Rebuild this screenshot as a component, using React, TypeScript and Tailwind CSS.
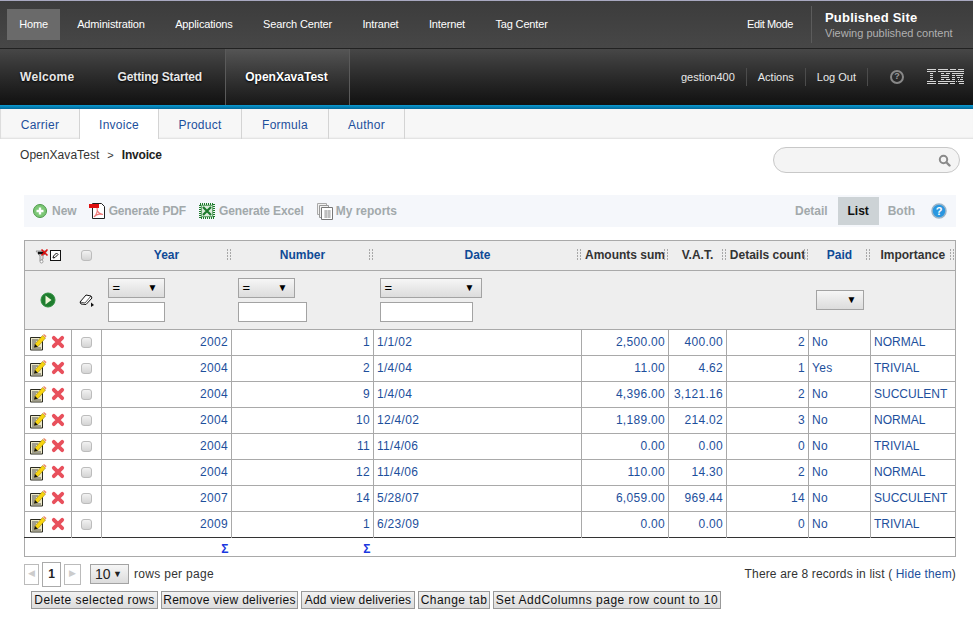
const topNav = ["Administration", "Applications", "Search Center", "Intranet", "Internet", "Tag Center"];
const tabs = [
  { label: "Carrier", width: "w-[79px]" },
  { label: "Invoice", width: "w-[79px]", active: true },
  { label: "Product", width: "w-[83px]" },
  { label: "Formula", width: "w-[87px]" },
  { label: "Author", width: "w-[76px]" },
];
const columns = [
  { label: "Year", link: true },
  { label: "Number", link: true },
  { label: "Date", link: true },
  { label: "Amounts sum" },
  { label: "V.A.T." },
  { label: "Details count" },
  { label: "Paid", link: true },
  { label: "Importance" },
];
const rows = [
  ["2002", "1", "1/1/02", "2,500.00", "400.00", "2", "No", "NORMAL"],
  ["2004", "2", "1/4/04", "11.00", "4.62", "1", "Yes", "TRIVIAL"],
  ["2004", "9", "1/4/04", "4,396.00", "3,121.16", "2", "No", "SUCCULENT"],
  ["2004", "10", "12/4/02", "1,189.00", "214.02", "3", "No", "NORMAL"],
  ["2004", "11", "11/4/06", "0.00", "0.00", "0", "No", "TRIVIAL"],
  ["2004", "12", "11/4/06", "110.00", "14.30", "2", "No", "NORMAL"],
  ["2007", "14", "5/28/07", "6,059.00", "969.44", "14", "No", "SUCCULENT"],
  ["2009", "1", "6/23/09", "0.00", "0.00", "0", "No", "TRIVIAL"],
];
const rightAligned = [true, true, false, true, true, true, false, false];
const actions = [
  { label: "Delete selected rows", className: "w-[127px] tracking-[0.45px]" },
  { label: "Remove view deliveries", className: "w-[137px] tracking-[0.3px]" },
  { label: "Add view deliveries", className: "w-[114px] tracking-[0.2px]" },
  { label: "Change tab", className: "w-[72px] tracking-[0.45px]" },
  { label: "Set AddColumns page row count to 10", className: "w-[228px] tracking-[0.5px]" },
];

// stripes of the logo: [x, width] per row
const ibmRows = [
  [[0, 9], [11, 10], [23, 6], [31, 6]],
  [[0, 9], [11, 12], [23, 7], [30, 7]],
  [[3, 3], [14, 3], [19, 4], [25, 12]],
  [[3, 3], [14, 8], [25, 3], [29, 5], [34, 2]],
  [[3, 3], [14, 8], [25, 3], [30, 3], [34, 2]],
  [[3, 3], [14, 3], [19, 4], [25, 3], [31, 1], [33, 3]],
  [[0, 9], [11, 12], [23, 5], [29, 1], [31, 6]],
  [[0, 9], [11, 10], [23, 5], [32, 5]],
];

function Grip() {
  return (
    <svg className="absolute right-0 top-[8px]" width="5" height="13" viewBox="0 0 5 13">
      {[0, 3, 6, 9].map((y) => (
        <g key={y} fill="#a8a8a8">
          <rect x="0" y={y} width="1" height="2" />
          <rect x="3" y={y} width="1" height="2" />
        </g>
      ))}
    </svg>
  );
}

function Checkbox() {
  return (
    <span className="mx-auto block h-[11px] w-[11px] rounded-[3px] border border-[#bcbcbc] bg-gradient-to-b from-[#f2f2f2] to-[#d4d4d4]" />
  );
}

function EditIcon() {
  return (
    <svg width="18" height="17" viewBox="0 0 18 17">
      <path d="M1.5 3.500h12v12.500h-12z" fill="#ece8c8" stroke="#2a2a20" />
      <path d="M3 6h6M3 8h4M3 10h3M3 12h2M3 14h9" stroke="#555" />
      <path d="M6 10l7.500-8.500 3 2.500-7.500 8.500-3.500.8z" fill="#f8d510" stroke="#8a7400" strokeWidth=".5" />
      <path d="M14 1l1-1 2.500 2-.8 1.500z" fill="#ee8a6a" />
      <path d="M6 10l-1 3.500 3.800-.8z" fill="#111" />
    </svg>
  );
}

function DeleteIcon() {
  return (
    <svg width="14" height="14" viewBox="0 0 14 14">
      <path d="M2.800 2.800l8.400 8.400M11.200 2.800l-8.400 8.400" stroke="#e8505c" strokeWidth="3.800" strokeLinecap="round" />
    </svg>
  );
}

function FakeSelect({ width, value }: { width: string; value?: string }) {
  return (
    <div className={`flex h-[20px] items-center justify-between border border-[#a3a3a3] bg-gradient-to-b from-[#f6f6f6] to-[#dcdcdc] pl-[4px] pr-[6px] text-[13px] text-black ${width}`}>
      <span>{value}</span>
      <span className="text-[10px] leading-none">▼</span>
    </div>
  );
}

function FilterCell({ selectWidth, inputWidth }: { selectWidth: string; inputWidth: string }) {
  return (
    <td className="pl-[6px] align-middle">
      <div className="flex flex-col gap-[4px]">
        <FakeSelect width={selectWidth} value="=" />
        <div className={`h-[20px] border border-[#a3a3a3] bg-white ${inputWidth}`} />
      </div>
    </td>
  );
}

function ToolbarAction({ icon, label, className }: { icon: React.ReactNode; label: string; className: string }) {
  return (
    <div className={`flex items-center ${className}`}>
      {icon}
      <span>{label}</span>
    </div>
  );
}

function IbmLogo() {
  return (
    <svg className="block" width="37" height="16" viewBox="0 0 37 16" fill="#d4d4d4">
      {ibmRows.map((row, r) => (
        <g key={r}>
          {row.map(([x, w]) => (
            <rect key={x} x={x} y={r * 2} width={w} height="1" />
          ))}
        </g>
      ))}
    </svg>
  );
}

export default function App() {
  return (
    <div className="h-[617px] w-[973px] overflow-hidden bg-white font-['Liberation_Sans',Arial,sans-serif] text-[12px] text-[#333]">
      {/* portal bars */}
      <div className="flex h-[49px] items-center border-t border-b border-t-[#a8a8c0] border-b-[#222] bg-gradient-to-b from-[#3c3c3c] to-[#474747] text-[11px] tracking-[-0.15px] text-white">
        <div className="ml-[7px] flex h-[31px] w-[53px] items-center justify-center bg-[#6a6a6a]">Home</div>
        <div className="ml-[2px] flex">
          {topNav.map((item) => (
            <span key={item} className="px-[15.2px]">{item}</span>
          ))}
        </div>
        <span className="ml-auto tracking-[-0.4px]">Edit Mode</span>
        <div className="ml-[18px] h-[37px] border-l border-[#5c5c5c]" />
        <div className="ml-[13px] mr-[21px] w-[127px] whitespace-nowrap pt-[1px]">
          <div className="text-[13px] font-bold leading-[16px] tracking-[0.2px]">Published Site</div>
          <div className="text-[11px] leading-[15px] tracking-normal text-[#b0b0b0]">Viewing published content</div>
        </div>
      </div>
      <div className="flex h-[56px] items-center bg-gradient-to-b from-[#474747] to-[#111] text-[#e8e8e8]">
        <div className="flex h-full font-bold [text-shadow:0_1px_2px_#000]">
          <span className="ml-[20px] self-center tracking-[0.3px]">Welcome</span>
          <span className="ml-[43px] self-center tracking-[-0.15px]">Getting Started</span>
          <span className="ml-[23px] flex w-[125px] items-center justify-center border-x border-[#5a5a5a] bg-gradient-to-b from-[#555] to-[#181818] pr-[2px] text-white">OpenXavaTest</span>
        </div>
        <div className="ml-auto flex items-center text-[11px]">
          <span>gestion400</span>
          <span className="mx-[11px] h-[18px] border-l border-[#4c4c4c]" />
          <span>Actions</span>
          <span className="mx-[11px] h-[18px] border-l border-[#4c4c4c]" />
          <span>Log Out</span>
          <span className="ml-[11px] h-[18px] border-l border-[#4c4c4c]" />
          <span className="ml-[22px] flex h-[14px] w-[14px] items-center justify-center rounded-full border-2 border-[#888] text-[9px] font-bold text-[#999]">?</span>
          <span className="ml-[23px] mr-[9px]"><IbmLogo /></span>
        </div>
      </div>
      <div className="h-[4px] bg-gradient-to-b from-[#0a9ad0] to-[#04699a]" />

      {/* section tabs */}
      <div className="flex h-[30px] border-l border-[#ddd] bg-[#f7f7f7] shadow-[inset_0_-2px_2px_-1px_#ddd]">
        {tabs.map((tab) => (
          <div
            key={tab.label}
            className={`flex items-center justify-center border-r border-[#d4d4d4] pt-[1px] tracking-[0.25px] text-[#1d4f9c] ${tab.width} ${tab.active ? "bg-white" : ""}`}
          >
            {tab.label}
          </div>
        ))}
      </div>

      {/* breadcrumb and search */}
      <div className="flex h-[56px] items-start">
        <div className="ml-[20px] mt-[9px] flex items-center leading-[14px]">
          <span className="tracking-[0.05px]">OpenXavaTest</span>
          <span className="ml-[8px] mr-[8px] text-[11px]">&gt;</span>
          <span className="font-bold tracking-[-0.2px] text-[#222]">Invoice</span>
        </div>
        <div className="ml-auto mr-[13px] mt-[8px] flex h-[26px] w-[187px] items-center justify-end rounded-full border border-[#c8c8c8] bg-[#f4f4f4] pr-[8px]">
          <svg width="13" height="13" viewBox="0 0 13 13">
            <circle cx="5.500" cy="5.500" r="3.700" fill="none" stroke="#8a8a8a" strokeWidth="2" />
            <path d="M8.500 8.500l3 3" stroke="#8a8a8a" strokeWidth="2.400" strokeLinecap="round" />
          </svg>
        </div>
      </div>

      {/* toolbar */}
      <div className="ml-[24px] mr-[17px] flex h-[32px] items-center bg-[#f5f7fb] font-bold text-[#a2a9ab]">
        <ToolbarAction
          className="ml-[9px] gap-[5px]"
          label="New"
          icon={
            <svg width="14" height="14" viewBox="0 0 14 14">
              <circle cx="7" cy="7" r="6.500" fill="#7cc776" stroke="#4e9a4a" />
              <path d="M7 3.500v7M3.500 7h7" stroke="#fff" strokeWidth="2.400" />
            </svg>
          }
        />
        <ToolbarAction
          className="ml-[12px] gap-[4px] tracking-[-0.17px]"
          label="Generate PDF"
          icon={
            <svg width="16" height="16" viewBox="0 0 16 16">
              <path d="M3.500.5h9l3 3v12h-12z" fill="#fff" stroke="#222" />
              <rect x="0" y="1" width="10" height="4" fill="#e01010" />
              <path d="M5 14c2-2 4-6 3-9M8 7c1 3 3 4 6 4.500M5 14c2-3 5-3.500 9-2.500" fill="none" stroke="#e77" strokeWidth="1.200" />
            </svg>
          }
        />
        <ToolbarAction
          className="ml-[13px] gap-[4px] tracking-[-0.15px]"
          label="Generate Excel"
          icon={
            <svg width="16" height="16" viewBox="0 0 16 16">
              <rect x="1" y="1" width="14" height="14" fill="#d8ead8" stroke="#1d7a2c" strokeWidth="2" strokeDasharray="1 1" />
              <rect x="2.500" y="2.500" width="11" height="11" fill="#dcecdc" stroke="#6aa874" />
              <path d="M4 4l8 8M12 4l-8 8" stroke="#1d7a2c" strokeWidth="2.200" />
            </svg>
          }
        />
        <ToolbarAction
          className="ml-[13px] gap-[3px]"
          label="My reports"
          icon={
            <svg width="16" height="17" viewBox="0 0 16 17">
              <path d="M.5 .5h9v11h-9z" fill="#f2f2f2" stroke="#aaa" />
              <path d="M2.500 2.500h9v12h-9z" fill="#f2f2f2" stroke="#999" />
              <path d="M4.500 4.500h11v12h-11z" fill="#fff" stroke="#777" />
              <path d="M7 8h7M7 10h7M7 12h7M7 14h7M9 7v8M12 7v8" stroke="#999" strokeWidth=".8" />
            </svg>
          }
        />
        <span className="ml-auto">Detail</span>
        <span className="ml-[10px] flex h-[28px] w-[41px] items-center justify-center bg-[#cdd3d6] text-[#111]">List</span>
        <span className="ml-[9px]">Both</span>
        <svg className="ml-[16px] mr-[9px]" width="16" height="16" viewBox="0 0 16 16">
          <circle cx="8" cy="8" r="7" fill="#2a97e0" stroke="#9ab4c8" strokeWidth="1.500" />
          <text x="8" y="12" textAnchor="middle" fontSize="11" fontWeight="700" fill="#fff">?</text>
        </svg>
      </div>

      {/* list */}
      <table className="ml-[24px] mt-[13px] w-[932px] table-fixed border-collapse border border-[#a9a9a9]">
        <colgroup>
          <col className="w-[47px]" />
          <col className="w-[30px]" />
          <col className="w-[130px]" />
          <col className="w-[142px]" />
          <col className="w-[208px]" />
          <col className="w-[87px]" />
          <col className="w-[58px]" />
          <col className="w-[82px]" />
          <col className="w-[62px]" />
          <col className="w-[85px]" />
        </colgroup>
        <thead className="bg-[#eeeeee]">
          <tr className="h-[30px] border-b border-[#a9a9a9]">
            <th className="p-0">
              <div className="ml-[10px] flex items-center">
                <svg width="15" height="16" viewBox="0 0 15 16">
                  <path d="M1 3h11l-4 5v3l-3 2V8z" fill="#ddd" stroke="#999" />
                  <circle cx="6.500" cy="13.500" r="1.500" fill="#fff" stroke="#999" />
                  <path d="M3 5h7" stroke="#111" strokeWidth="2.500" />
                  <path d="M6.500 1.500l6 6M12.500 1.500l-6 6" stroke="#e01010" strokeWidth="1.600" />
                </svg>
                <svg width="11" height="11" viewBox="0 0 11 11">
                  <rect x=".5" y=".5" width="10" height="10" fill="#fff" stroke="#111" />
                  <path d="M3 8l.5-2 3-3 1.500 1.500-3 3z" fill="#fff" stroke="#111" />
                </svg>
              </div>
            </th>
            <th className="p-0"><Checkbox /></th>
            {columns.map((col) => (
              <th key={col.label} className={`relative overflow-hidden whitespace-nowrap p-0 pb-[2px] text-center text-[12px] font-bold ${col.link ? "text-[#0f4a96]" : "text-[#333]"}`}>
                {col.label}
                <Grip />
              </th>
            ))}
          </tr>
          <tr className="h-[59px] border-b border-[#a9a9a9]">
            <th className="p-0">
              <svg className="mx-auto" width="16" height="16" viewBox="0 0 16 16">
                <circle cx="8" cy="8" r="7" fill="#1f7d2f" stroke="#2d8f3d" />
                <path d="M5.500 3.500l6 4.500-6 4.500z" fill="#eef6d8" />
              </svg>
            </th>
            <th className="p-0">
              <svg className="mx-auto" width="15" height="14" viewBox="0 0 15 14">
                <path d="M1 9l6-7 5 1 1 2-6 6.500-5-.5z" fill="#fff" stroke="#111" />
                <path d="M1 9l5 1 6-7" fill="none" stroke="#111" strokeWidth=".7" />
                <path d="M12 9.500l3 2.500-3 2z" fill="#111" />
              </svg>
            </th>
            <FilterCell selectWidth="w-[57px]" inputWidth="w-[57px]" />
            <FilterCell selectWidth="w-[57px]" inputWidth="w-[69px]" />
            <FilterCell selectWidth="w-[102px]" inputWidth="w-[93px]" />
            <th /><th /><th />
            <th className="p-0 text-center"><FakeSelect width="w-[48px] mx-auto" /></th>
            <th />
          </tr>
        </thead>
        <tbody>
          {rows.map((row, r) => (
            <tr key={r} className={`h-[26px] border-b ${r === rows.length - 1 ? "border-b-[#333]" : "border-b-[#a9a9a9]"}`}>
              <td className="border-r border-[#a9a9a9] p-0">
                <div className="ml-[4px] flex items-center gap-[4px] pb-[1px]">
                  <EditIcon />
                  <DeleteIcon />
                </div>
              </td>
              <td className="border-r border-[#a9a9a9] p-0"><Checkbox /></td>
              {row.map((value, c) => (
                <td
                  key={c}
                  className={`border-r border-[#a9a9a9] px-[3px] pt-0 pb-[2px] text-[#1d4f9c] ${c === 7 ? "tracking-normal" : "tracking-[0.3px]"} ${rightAligned[c] ? "text-right" : "text-left"}`}
                >
                  {value}
                </td>
              ))}
            </tr>
          ))}
          <tr className="h-[19px]">
            <td /><td />
            <td className="pt-[3px] pb-0 pr-[3px] text-right text-[12px] font-bold leading-none text-[#1a38e0]">Σ</td>
            <td className="pt-[3px] pb-0 pr-[3px] text-right text-[12px] font-bold leading-none text-[#1a38e0]">Σ</td>
            <td colSpan={6} />
          </tr>
        </tbody>
      </table>

      {/* pagination */}
      <div className="ml-[24px] mr-[17px] mt-[4px] flex h-[26px] items-center">
        <span className="flex h-[21px] w-[15px] items-center justify-center border border-[#bbb] text-[9px] text-[#ccc]">◀</span>
        <span className="ml-[3px] flex h-[25px] w-[19px] items-center justify-center border border-[#aaa] font-bold text-[#222]">1</span>
        <span className="ml-[3px] flex h-[21px] w-[17px] items-center justify-center border border-[#bbb] text-[9px] text-[#ccc]">▶</span>
        <div className="ml-[9px] flex h-[20px] w-[39px] items-center justify-between border border-[#a3a3a3] bg-gradient-to-b from-[#f6f6f6] to-[#dcdcdc] pl-[4px] pr-[6px] text-[14px] text-[#222]">
          <span>10</span>
          <span className="text-[9px] leading-none">▼</span>
        </div>
        <span className="ml-[5px] tracking-[0.3px]">rows per page</span>
        <span className="ml-auto tracking-[0.15px]">
          There are 8 records in list ( <span className="text-[#1d4f9c]">Hide them</span>)
        </span>
      </div>

      {/* list actions */}
      <div className="ml-[31px] mt-[4px] flex gap-[3px]">
        {actions.map((action) => (
          <button
            key={action.label}
            className={`h-[18px] whitespace-nowrap border border-[#999] bg-gradient-to-b from-[#f2f2f2] to-[#dcdcdc] text-[12px] leading-none text-[#111] ${action.className}`}
          >
            {action.label}
          </button>
        ))}
      </div>
    </div>
  );
}
